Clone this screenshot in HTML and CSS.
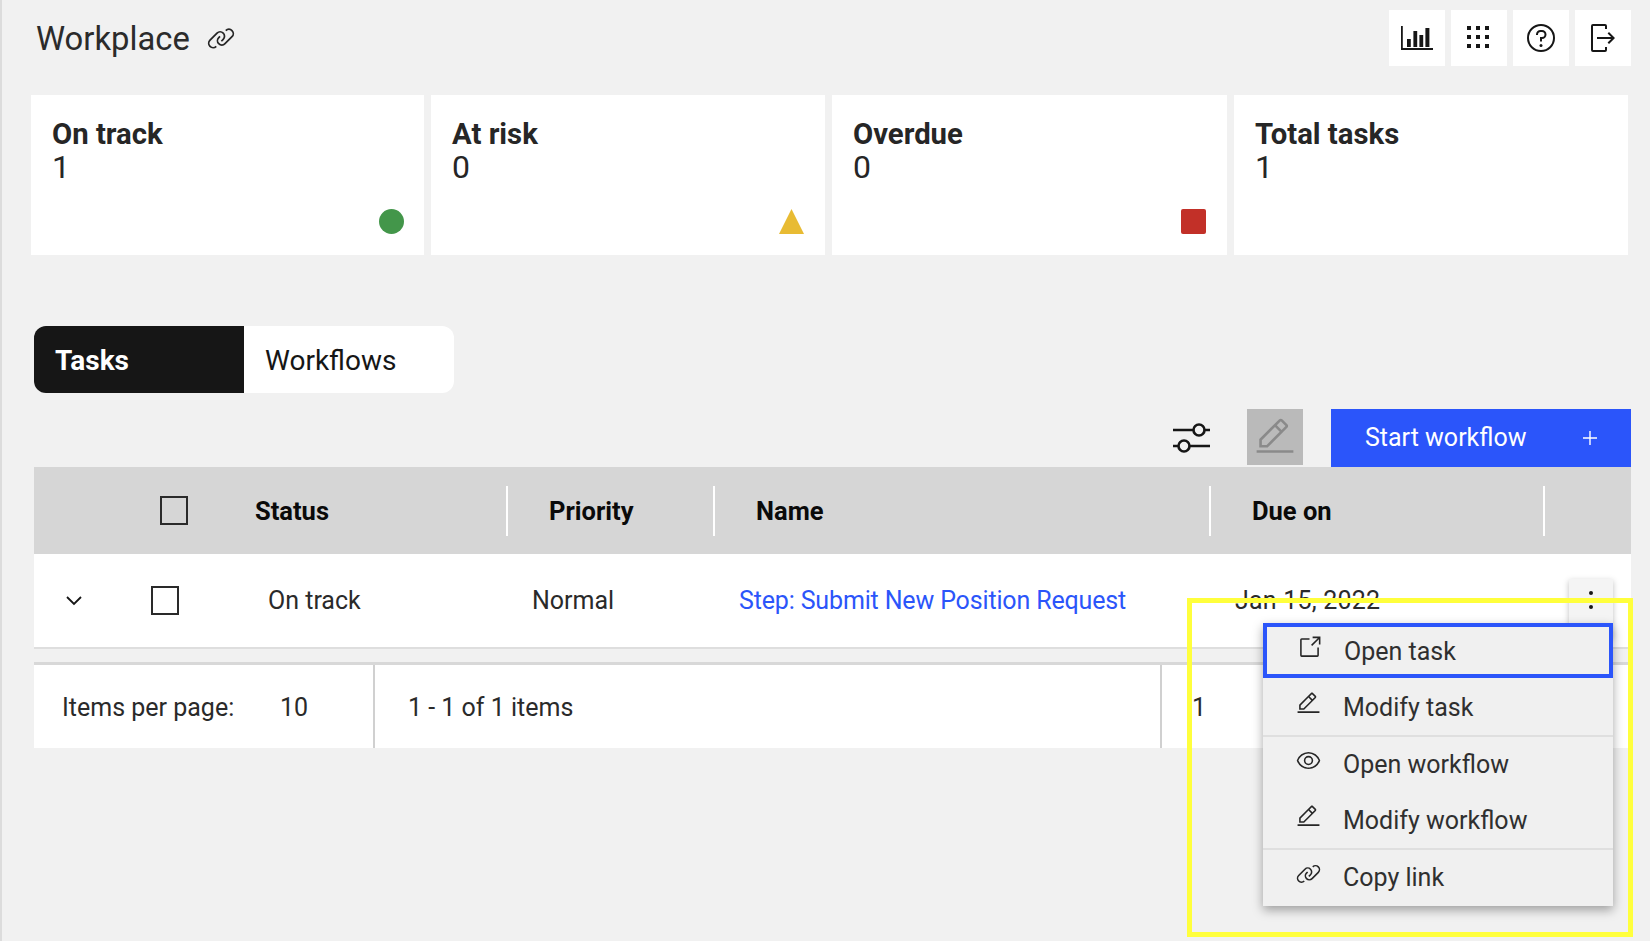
FILE: index.html
```html
<!DOCTYPE html>
<html lang="en">
<head>
<meta charset="utf-8">
<title>Workplace</title>
<link rel="stylesheet" href="styles.css">
</head>
<body>
<main class="page">
  <header class="top">
    <div class="title-wrap">
      <h1 class="title">Workplace</h1>
      <svg class="title-link" viewBox="0 0 32 32"><path d="M29.25,6.76a6,6,0,0,0-8.5,0l1.42,1.42a4,4,0,1,1,5.67,5.67l-8,8a4,4,0,1,1-5.67-5.66l1.41-1.42-1.41-1.42-1.42,1.42a6,6,0,0,0,0,8.5A6,6,0,0,0,17,25a6,6,0,0,0,4.27-1.76l8-8A6,6,0,0,0,29.25,6.76Z"/><path d="M4.19,24.82a4,4,0,0,1,0-5.67l8-8a4,4,0,0,1,5.67,0A3.94,3.94,0,0,1,19,14a4,4,0,0,1-1.17,2.85L15.71,19l1.42,1.42,2.12-2.12a6,6,0,0,0-8.51-8.51l-8,8a6,6,0,0,0,0,8.51A6,6,0,0,0,7,28a6.07,6.07,0,0,0,4.28-1.76L9.87,24.82A4,4,0,0,1,4.19,24.82Z"/></svg>
    </div>
    <div class="top-actions">
      <button class="top-btn"><svg class="chart-icon" viewBox="0 0 32 24"><path d="M0 0h1.8v22H32v2H0z"/><path d="M6 13h3.800v8H6zM12.400 5h3.800v16h-3.800zM18.400 9h3.800v12h-3.800zM24.400 2h4v19h-4z"/></svg></button>
      <button class="top-btn"><svg class="grid-icon" viewBox="0 0 24 24"><path d="M0 0h4v4H0zM9 0h4v4H9zM18 0h4v4h-4zM0 9h4v4H0zM9 9h4v4H9zM18 9h4v4h-4zM0 18h4v4H0zM9 18h4v4H9zM18 18h4v4h-4z"/></svg></button>
      <button class="top-btn"><svg class="top-icon" viewBox="0 0 32 32"><path d="M16,2A14,14,0,1,0,30,16,14,14,0,0,0,16,2Zm0,26A12,12,0,1,1,28,16,12,12,0,0,1,16,28Z"/><circle cx="16" cy="23.5" r="1.5"/><path d="M17,8H15.5A4.49,4.49,0,0,0,11,12.5V13h2v-.5A2.5,2.5,0,0,1,15.5,10H17a2.5,2.5,0,0,1,0,5H15v4.5h2V17a4.5,4.5,0,0,0,0-9Z"/></svg></button>
      <button class="top-btn"><svg class="top-icon" viewBox="0 0 32 32"><path d="M6,30H18a2.0023,2.0023,0,0,0,2-2V25H18v3H6V4H18V7h2V4a2.0023,2.0023,0,0,0-2-2H6A2.0023,2.0023,0,0,0,4,4V28A2.0023,2.0023,0,0,0,6,30Z"/><path d="M20.586 20.586 24.172 17 10 17 10 15 24.172 15 20.586 11.414 22 10 28 16 22 22 20.586 20.586z"/></svg></button>
    </div>
  </header>

  <section class="cards">
    <article class="card">
      <div class="card-label">On track</div>
      <div class="card-value">1</div>
      <span class="mark mark-circle"></span>
    </article>
    <article class="card">
      <div class="card-label">At risk</div>
      <div class="card-value">0</div>
      <svg class="mark" viewBox="0 0 25 25"><path class="tri" d="M12.5 0 25 25H0z"/></svg>
    </article>
    <article class="card">
      <div class="card-label">Overdue</div>
      <div class="card-value">0</div>
      <span class="mark mark-square"></span>
    </article>
    <article class="card">
      <div class="card-label">Total tasks</div>
      <div class="card-value">1</div>
    </article>
  </section>

  <nav class="tabs">
    <div class="tab tab-active">Tasks</div>
    <div class="tab">Workflows</div>
  </nav>

  <div class="toolbar">
    <svg class="sliders" viewBox="0 0 37 30"><g class="sliders-g"><path d="M0 7h20M32 7h5M0 23h5M17 23h20"/><circle cx="26" cy="7" r="5.5"/><circle cx="11" cy="23" r="5.5"/></g></svg>
    <button class="edit-btn"><svg class="edit-icon" viewBox="0 0 32 32"><path d="M2 26H30V28H2zM25.4 9c.8-.8.8-2 0-2.8 0 0 0 0 0 0l-3.6-3.6c-.8-.8-2-.8-2.8 0 0 0 0 0 0 0l-15 15V24h6.4L25.4 9zM20.4 4L24 7.6l-3 3L17.4 7 20.4 4zM6 22v-3.6l10-10 3.6 3.6-10 10H6z"/></svg></button>
    <button class="start-btn"><span class="start-label">Start workflow</span><svg class="plus" viewBox="0 0 14 14"><path d="M6.3 0h1.4v6.3H14v1.4H7.700V14H6.300V7.700H0V6.300h6.300z"/></svg></button>
  </div>

  <section class="table">
    <div class="thead">
      <div class="th th-first"><span class="check check-head"></span><span>Status</span></div>
      <div class="th">Priority</div>
      <div class="th">Name</div>
      <div class="th">Due on</div>
      <div class="th"></div>
    </div>
    <div class="trow">
      <svg class="chevron" viewBox="0 0 16 10"><path d="M1 1l7 7 7-7"/></svg>
      <span class="check"></span>
      <span>On track</span>
      <span>Normal</span>
      <a class="task-link" href="#">Step: Submit New Position Request</a>
      <span class="due">Jan 15, 2022</span>
      <button class="kebab"><i></i><i></i></button>
    </div>
    <footer class="pager">
      <div class="pager-size"><span class="pager-label">Items per page:</span><span>10</span></div>
      <div class="pager-range">1 - 1 of 1 items</div>
      <div class="pager-page">1</div>
    </footer>
  </section>
</main>

<ul class="menu">
  <li class="menu-item menu-focus"><svg class="menu-icon" viewBox="0 0 32 32"><path d="M26,28H6a2.0027,2.0027,0,0,1-2-2V6A2.0027,2.0027,0,0,1,6,4H16V6H6V26H26V16h2V26A2.0027,2.0027,0,0,1,26,28Z"/><path d="M20 2 20 4 26.586 4 18 12.586 19.414 14 28 5.414 28 12 30 12 30 2 20 2z"/></svg>Open task</li>
  <li class="menu-item menu-tall"><svg class="menu-icon" viewBox="0 0 32 32"><path d="M2 26H30V28H2zM25.4 9c.8-.8.8-2 0-2.8 0 0 0 0 0 0l-3.6-3.6c-.8-.8-2-.8-2.8 0 0 0 0 0 0 0l-15 15V24h6.4L25.4 9zM20.4 4L24 7.6l-3 3L17.4 7 20.4 4zM6 22v-3.6l10-10 3.6 3.6-10 10H6z"/></svg>Modify task</li>
  <li class="menu-item menu-sep"><svg class="menu-icon" viewBox="0 0 32 32"><path d="M30.94,15.66A16.69,16.69,0,0,0,16,5,16.69,16.69,0,0,0,1.06,15.66a1,1,0,0,0,0,.68A16.69,16.69,0,0,0,16,27,16.69,16.69,0,0,0,30.94,16.34,1,1,0,0,0,30.94,15.66ZM16,25c-5.3,0-10.9-3.93-12.93-9C5.1,10.93,10.7,7,16,7s10.9,3.93,12.93,9C26.9,21.07,21.3,25,16,25Z"/><path d="M16,10a6,6,0,1,0,6,6A6,6,0,0,0,16,10Zm0,10a4,4,0,1,1,4-4A4,4,0,0,1,16,20Z"/></svg>Open workflow</li>
  <li class="menu-item"><svg class="menu-icon" viewBox="0 0 32 32"><path d="M2 26H30V28H2zM25.4 9c.8-.8.8-2 0-2.8 0 0 0 0 0 0l-3.6-3.6c-.8-.8-2-.8-2.8 0 0 0 0 0 0 0l-15 15V24h6.4L25.4 9zM20.4 4L24 7.6l-3 3L17.4 7 20.4 4zM6 22v-3.6l10-10 3.6 3.6-10 10H6z"/></svg>Modify workflow</li>
  <li class="menu-item menu-sep"><svg class="menu-icon" viewBox="0 0 32 32"><path d="M29.25,6.76a6,6,0,0,0-8.5,0l1.42,1.42a4,4,0,1,1,5.67,5.67l-8,8a4,4,0,1,1-5.67-5.66l1.41-1.42-1.41-1.42-1.42,1.42a6,6,0,0,0,0,8.5A6,6,0,0,0,17,25a6,6,0,0,0,4.27-1.76l8-8A6,6,0,0,0,29.25,6.76Z"/><path d="M4.19,24.82a4,4,0,0,1,0-5.67l8-8a4,4,0,0,1,5.67,0A3.94,3.94,0,0,1,19,14a4,4,0,0,1-1.17,2.85L15.71,19l1.42,1.42,2.12-2.12a6,6,0,0,0-8.51-8.51l-8,8a6,6,0,0,0,0,8.51A6,6,0,0,0,7,28a6.07,6.07,0,0,0,4.28-1.76L9.87,24.82A4,4,0,0,1,4.19,24.82Z"/></svg>Copy link</li>
</ul>
<div class="highlight"></div>
</body>
</html>
```

FILE: styles.css
```css
* { box-sizing: border-box; }

html, body {
  margin: 0;
  height: 941px;
  overflow: hidden;
}

body {
  position: relative;
  background: #f1f1f1;
  border-left: 2px solid #dcdcdc;
  font-family: Roboto, "Liberation Sans", sans-serif;
  font-size: 25px;
  color: #2a2a2a;
}

button {
  border: 0;
  padding: 0;
  font: inherit;
  color: inherit;
}

svg { display: block; fill: currentColor; }

.page {
  display: flex;
  flex-direction: column;
  padding: 0 19px 0 32px;
}

/* header */
.top {
  display: flex;
  justify-content: space-between;
  height: 95px;
  padding-top: 10px;
}

.title-wrap {
  display: flex;
  align-items: center;
  gap: 17px;
  height: 56px;
  padding-left: 2px;
}

.title {
  margin: 0;
  padding-top: 2px;
  font-size: 32.800px;
  font-weight: 400;
  color: #2b2b2b;
}

.title-link { width: 28px; height: 28px; color: #262626; }

.top-actions { display: flex; gap: 6px; }

.top-btn {
  display: flex;
  align-items: center;
  justify-content: center;
  width: 56px;
  height: 56px;
  background: #fff;
  color: #161616;
}

.top-icon { width: 32px; height: 32px; }
.chart-icon { width: 32px; height: 24px; }
.grid-icon { width: 24px; height: 24px; }

/* cards */
.cards {
  display: grid;
  grid-template-columns: 393px 394px 395px 394px;
  gap: 7px;
  margin-left: -3px;
}

.card {
  position: relative;
  height: 160px;
  padding: 23px 21px;
  background: #fff;
}

.card-label {
  font-size: 29.300px;
  font-weight: 700;
  line-height: 33px;
  color: #262626;
}

.card-value {
  font-size: 32px;
  font-weight: 400;
  line-height: 32px;
  color: #262626;
}

.mark {
  position: absolute;
  right: 21px;
  bottom: 21px;
  width: 25px;
  height: 25px;
}

.mark-circle { right: 20px; border-radius: 50%; background: #43964a; }
.mark-square { border-radius: 2px; background: #c23028; }
.tri { fill: #e8bb33; }

/* tabs */
.tabs {
  display: flex;
  width: 420px;
  height: 67px;
  margin-top: 71px;
  border-radius: 12px;
  overflow: hidden;
  background: #fff;
}

.tab {
  display: flex;
  align-items: center;
  flex: 1;
  padding: 2px 0 0 21px;
  font-size: 28px;
  color: #161616;
}

.tab-active {
  background: #161616;
  color: #fff;
  font-weight: 700;
}

/* toolbar */
.toolbar {
  display: flex;
  align-items: flex-start;
  justify-content: flex-end;
  height: 58px;
  margin-top: 16px;
}

.sliders {
  width: 37px;
  height: 30px;
  margin: 14px 37px 0 0;
}

.sliders-g { fill: none; stroke: #161616; stroke-width: 2.6; }

.edit-btn {
  display: flex;
  align-items: center;
  justify-content: center;
  width: 56px;
  height: 56px;
  margin-right: 28px;
  background: #bababa;
  color: #8a8a8a;
}

.edit-icon { width: 42px; height: 42px; }

.start-btn {
  display: flex;
  align-items: center;
  justify-content: space-between;
  width: 300px;
  height: 58px;
  padding: 0 34px;
  background: #2b55fa;
  color: #fff;
}

.start-label { margin-bottom: 2px; }

.plus { width: 14px; height: 14px; }

/* table */
.thead {
  display: grid;
  grid-template-columns: 472px 207px 496px 334px 88px;
  align-items: center;
  height: 87px;
  background: #d6d6d6;
  font-size: 25.500px;
  font-weight: 700;
  color: #0a0a0a;
}

.th {
  display: flex;
  align-items: center;
  height: 50px;
  padding-left: 41px;
  border-left: 2px solid #fff;
}

.th-first {
  gap: 67px;
  padding-left: 126px;
  border-left: 0;
}

.check {
  display: block;
  width: 28px;
  height: 29px;
  border: 2px solid #2a2a2a;
}

.check-head { background: transparent; }

.trow {
  display: grid;
  grid-template-columns: 117px 117px 264px 207px 496px 334px 44px;
  align-items: center;
  height: 95px;
  background: #fff;
  border-bottom: 2px solid #dedede;
}

.chevron {
  width: 16px;
  height: 10px;
  margin-left: 32px;
  fill: none;
  stroke: #161616;
  stroke-width: 1.8;
}

.task-link {
  color: #2b55fa;
  text-decoration: none;
  letter-spacing: -.15px;
}

.due { letter-spacing: .2px; }

.kebab {
  display: flex;
  flex-direction: column;
  align-items: center;
  gap: 10px;
  width: 44px;
  height: 58px;
  padding-top: 12px;
  margin-top: 14px;
  background: #f4f4f4;
  box-shadow: 0 2px 6px rgba(0, 0, 0, .25);
}

.kebab i {
  width: 4px;
  height: 4px;
  border-radius: 50%;
  background: #161616;
}

.pager {
  display: flex;
  align-items: stretch;
  height: 86px;
  margin-top: 13px;
  background: #fff;
  border-top: 3px solid #d8d8d8;
}

.pager > div { display: flex; align-items: center; padding-top: 2px; }

.pager-size {
  width: 341px;
  padding-left: 28px;
  border-right: 2px solid #d0d0d0;
}

.pager-label { width: 218px; }

.pager-range {
  width: 787px;
  padding-left: 33px;
  border-right: 2px solid #d0d0d0;
}

.pager-page { padding-left: 30px; }

/* overflow menu */
.menu {
  position: absolute;
  left: 1261px;
  top: 623px;
  width: 350px;
  margin: 0;
  padding: 0 0 1px;
  list-style: none;
  background: #f0f0f0;
  box-shadow: 0 4px 10px rgba(0, 0, 0, .35);
  color: #2f2f2f;
}

.menu-item {
  display: flex;
  align-items: center;
  gap: 22px;
  height: 56px;
  padding-left: 33px;
}

.menu-focus { height: 55px; padding: 1px 0 0 30px; border: 4px solid #2b55fa; }
.menu-tall { height: 57px; padding-top: 2px; }
.menu-sep { height: 57px; border-top: 2px solid #dfdfdf; }

.menu-icon { width: 25px; height: 25px; margin-bottom: 8px; flex: none; color: #262626; }

/* annotation frame */
.highlight {
  position: absolute;
  left: 1185px;
  top: 598px;
  width: 446px;
  height: 339px;
  border: 5px solid #ffff3c;
  pointer-events: none;
}
```
